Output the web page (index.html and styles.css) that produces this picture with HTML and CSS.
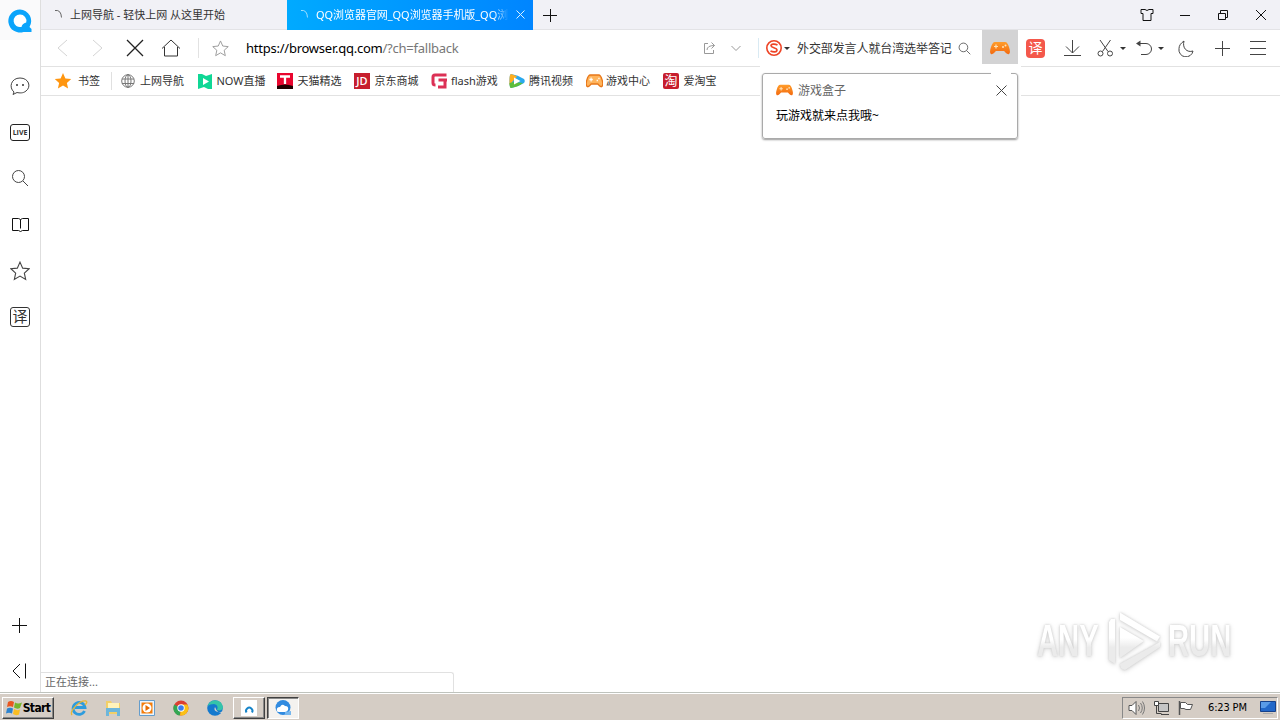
FILE: index.html
```html
<!DOCTYPE html>
<html lang="zh-CN">
<head>
    <meta charset="UTF-8">
    <title>QQ浏览器</title>
    <link rel="stylesheet" href="styles.css">
</head>
<body>

<svg class="defs" width="0" height="0">
    <defs>
        <linearGradient id="orange" x1="0" y1="0" x2="0" y2="1">
            <stop offset="0" stop-color="#ff9d2b"/>
            <stop offset="1" stop-color="#f36a10"/>
        </linearGradient>
        <linearGradient id="fade" gradientUnits="userSpaceOnUse" x1="0" y1="0" x2="0" y2="64">
            <stop offset=".45" stop-color="#fff"/>
            <stop offset=".6" stop-color="#ebebeb"/>
        </linearGradient>
    </defs>
    <symbol id="gamepad" viewBox="0 0 20 14">
        <path d="M5 1h10c2 0 3 2 4 5s1.500 6 0 7-4-2-5-3H6c-1 1-3.500 4-5 3s-1-4 0-7 2-5 4-5z" fill="url(#orange)"/>
        <path d="M4 5.500h4M6 3.500v4" stroke="#ffe3b8" stroke-width="1.200"/>
        <circle cx="13" cy="6" r="1" fill="#ffe3b8"/>
        <circle cx="15.500" cy="4.500" r="1" fill="#ffe3b8"/>
    </symbol>
    <symbol id="star" viewBox="0 0 18 18">
        <path d="M9 1l2.400 5.400 5.800.6-4.300 3.900 1.200 5.700L9 13.600l-5.100 3 1.200-5.700L.8 7l5.800-.6z"/>
    </symbol>
    <symbol id="search" viewBox="0 0 18 18">
        <circle cx="7.500" cy="7.500" r="6"/>
        <path d="M12 12l5 5"/>
    </symbol>
</svg>

<div class="screen">
    <div class="browser">
        <!-- 侧边栏 -->
        <div class="sidebar">
            <div class="logo">
                <svg width="24" height="24" viewBox="0 0 24 24"><path d="M12 .5a11.500 11.500 0 1 0 3.500 22.400h8V20l-2-2A11.500 11.500 0 0 0 12 .5z" fill="#0aa4fb"/><path d="M12 5.500a6.300 6.300 0 1 0 1.500 12.400q.5-3.500 4.700-4.500A6.300 6.300 0 0 0 12 5.500z" fill="#fff"/></svg>
            </div>
            <div class="side-item"><svg width="20" height="19" viewBox="0 0 20 19"><path d="M4 15C-1.500 10.500 1 1 10 1s11.500 9 6 13c-3 2.500-6.500 2-9 1.500L3 17.500z"/><circle class="dot" cx="7" cy="8" r="1"/><circle class="dot" cx="13" cy="8" r="1"/></svg></div>
            <div class="side-item"><span class="live">LIVE</span></div>
            <div class="side-item"><svg width="18" height="18"><use href="#search"/></svg></div>
            <div class="side-item"><svg class="dark" width="19" height="16" viewBox="0 0 19 16"><path d="M1.500 1.500h6l2 1 2-1h6v12h-6l-2 1-2-1h-6zM9.500 2.500v9"/></svg></div>
            <div class="side-item"><svg width="20" height="20"><use href="#star"/></svg></div>
            <div class="side-item"><span class="side-yi">译</span></div>
            <div class="side-bottom">
                <div class="side-item"><svg class="dark" width="16" height="16"><path d="M0 8.500h15M7.500 1v15"/></svg></div>
                <div class="side-item"><svg class="dark" width="15" height="16"><path d="M8 1L1 8l7 7M13.500 .5v15"/></svg></div>
            </div>
        </div>

        <div class="main">
            <!-- 标签栏 -->
            <div class="tabs">
                <div class="tab">
                    <svg class="spinner" width="10" height="10"><path d="M1 1.500q6-1 6.500 7"/></svg>
                    <span class="tab-title">上网导航 - 轻快上网 从这里开始</span>
                </div>
                <div class="tab active">
                    <svg class="spinner" width="10" height="10"><path d="M1 1.500q6-1 6.500 7"/></svg>
                    <span class="tab-title">QQ浏览器官网_QQ浏览器手机版_QQ浏</span>
                    <svg class="tab-close" width="9" height="9"><path d="M.5 .5l8 8M8.500 .5l-8 8"/></svg>
                </div>
                <svg class="new-tab" width="14" height="14"><path d="M0 7.500h14M7.500 1v13"/></svg>
                <div class="window-buttons">
                    <svg width="14" height="13"><path d="M1 1.500h4q2 2 4 0h4v4h-2v7H3v-7H1z"/></svg>
                    <svg width="12" height="12"><path d="M1 6.500h10"/></svg>
                    <svg width="12" height="12"><path d="M1.500 4.500h7v6h-7zM3.500 4V1.500h7v7H9"/></svg>
                    <svg width="12" height="12"><path d="M1 1l10 10M11 1L1 11"/></svg>
                </div>
            </div>

            <!-- 工具栏 -->
            <div class="toolbar">
                <div class="nav">
                    <div class="nav-btn disabled"><svg width="12" height="18"><path d="M11 1L2 9l9 8"/></svg></div>
                    <div class="nav-btn disabled"><svg width="12" height="18"><path d="M1 1l9 8-9 8"/></svg></div>
                    <div class="nav-btn stop"><svg width="18" height="18"><path d="M1 1l16 16M17 1L1 17"/></svg></div>
                    <div class="nav-btn"><svg width="20" height="18"><path d="M1 9.500L10 1l9 8.500M3.500 8v9h13V8"/></svg></div>
                </div>
                <div class="address">
                    <svg class="fav" width="17" height="17"><use href="#star"/></svg>
                    <span class="url">https://browser.qq.com<span class="path">/?ch=fallback</span></span>
                    <svg class="share" width="13" height="13"><path d="M5 1.500H1.500v10h9V8M4 8q0-4.500 7.500-4.500M8.500 .5l3 3-3 3"/></svg>
                    <svg class="down" width="10" height="7"><path d="M.5 1L5 5.500 9.500 1"/></svg>
                </div>
                <div class="search">
                    <svg class="sogou" width="16" height="16"><circle cx="8" cy="8" r="7.200"/><path d="M11.500 5C9 3.700 5 3.700 5 5.800S11 7.600 11 10s-4 2.300-6.500 1"/></svg>
                    <i class="caret"></i>
                    <span class="search-text">外交部发言人就台湾选举答记</span>
                    <svg class="find" width="13" height="13"><use href="#search"/></svg>
                </div>
                <div class="game-btn"><svg width="20" height="14"><use href="#gamepad"/></svg></div>
                <div class="tools">
                    <span class="tool yi">译</span>
                    <svg class="tool download" width="18" height="17"><path d="M9.500 0v13M3 6.500L9.500 13 16 6.500M1 15.500h17"/></svg>
                    <svg class="tool scissors" width="17" height="17"><path d="M3 0l8 11.500M13.500 0l-8 11.500"/><circle cx="3.500" cy="13.500" r="2.500"/><circle cx="13" cy="13.500" r="2.500"/></svg>
                    <i class="caret"></i>
                    <svg class="tool undo" width="17" height="16"><path d="M1 3.500h9a5.500 5.500 0 0 1 0 11H5"/><path class="arrow" d="M0 3.500L4.500 .5v6z"/></svg>
                    <i class="caret"></i>
                    <svg class="tool moon" width="16" height="17"><path d="M6 1C3 3 1 5.500 1 8.500a7 7 0 0 0 14 2.500C9 13 4 8 6 1z"/></svg>
                    <svg class="tool plus" width="15" height="15"><path d="M0 7.500h15M7.500 0v15"/></svg>
                    <svg class="tool menu" width="16" height="15"><path d="M0 .5h16M0 7.500h16M0 13.500h16"/></svg>
                </div>
            </div>

            <!-- 书签栏 -->
            <div class="bookmarks">
                <div class="bookmark first"><svg class="gold" width="18" height="18"><use href="#star"/></svg><span>书签</span></div>
                <div class="bookmark b-nav"><svg width="14" height="14"><g fill="none" stroke="#777"><circle cx="7" cy="7" r="6.300"/><ellipse cx="7" cy="7" rx="3" ry="6.300"/><path d="M1 5h12M1 9.500h12M7 0v14"/></g></svg><span>上网导航</span></div>
                <div class="bookmark b-now"><svg width="14" height="15"><path d="M0 0h4l4 2 6-2v15h-4l-4-2-6 2z" fill="#10d795"/><path d="M5 4l6 3.500L5 11z" fill="#fff"/></svg><span>NOW直播</span></div>
                <div class="bookmark b-tmall"><svg width="16" height="16"><path d="M0 0h16v16H0z" fill="#e9052e"/><path d="M0 13q8-3 16 0v3H0z" fill="#200"/><path d="M3 3.500h10M8 3.500V11" stroke="#fff" stroke-width="2.300"/></svg><span>天猫精选</span></div>
                <div class="bookmark b-jd"><b class="jd">JD</b><span>京东商城</span></div>
                <div class="bookmark b-flash"><svg width="16" height="16"><path d="M15.500 2H4Q2 2 2 4v6q0 2 2.500 2M16 7H7.500M14 7v7H7" fill="none" stroke="#dc3055" stroke-width="3"/></svg><span>flash游戏</span></div>
                <div class="bookmark b-video"><svg width="16" height="16"><path d="M2 1Q.5 1 .5 8T2 15q7-1 13-5 1.500-2 0-4Q9 2 2 1z" fill="#29a9ee"/><path d="M2 1Q.5 1 .5 8V12L8 3.500Q5 1.500 2 1z" fill="#ffae20"/><path d="M.5 10Q.5 15 2 15q7-1 12-5L5 9z" fill="#5dbd3a"/><path d="M5 4.500l6.500 3.500L5 11.500z" fill="#fff"/></svg><span>腾讯视频</span></div>
                <div class="bookmark b-game"><svg width="17" height="14" viewBox="0 0 20 14" preserveAspectRatio="none"><path d="M5 1h10c2 0 3 2 4 5s1 5.500-.5 6.500S15 11 14 10H6c-1 1-3 3.500-4.500 2.500S0 9 1 6s2-5 4-5z" fill="#ffb45c" stroke="#e87718" stroke-width="1.500"/><path d="M4 5.500h4M6 3.500v4M12.500 6.500h1.500M14.500 4.500H16" stroke="#fff" stroke-width="1.300"/></svg><span>游戏中心</span></div>
                <div class="bookmark b-tao"><b class="tao">淘</b><span>爱淘宝</span></div>
            </div>

            <div class="page">
                <div class="watermark">
                    <span>ANY</span>
                    <svg width="58" height="64"><path d="M14 18v31l24-17zM14 11V3.500L54 27.500l-3 5L14 11M19 61l35-23v-5L14 55q0 5 5 6M9 10H5l-2 3v38l6 4z"/></svg>
                    <span>RUN</span>
                </div>
                <div class="status">正在连接...</div>
            </div>

            <!-- 游戏盒子提示 -->
            <div class="tip-area">
                <div class="tip">
                    <div class="tip-head">
                        <svg width="17" height="12" viewBox="0 0 20 14" preserveAspectRatio="none"><use href="#gamepad"/></svg>
                        <span>游戏盒子</span>
                        <svg class="tip-close" width="11" height="11"><path d="M.5 .5l10 10M10.500 .5l-10 10"/></svg>
                    </div>
                    <div class="tip-text">玩游戏就来点我哦~</div>
                </div>
            </div>
        </div>
    </div>

    <!-- 任务栏 -->
    <div class="taskbar">
        <div class="start">
            <svg width="17" height="16"><path d="M2 2q3-2 6 0L7 7Q4 5.500 1 7z" fill="#e9561f"/><path d="M9 2.500q3 2 7 0L14 8q-3 1.500-6-.5z" fill="#75b62c"/><path d="M1 8.500q3-1.500 6 0L6 13.500Q3 12 0 13.500z" fill="#2c83cf"/><path d="M8 9q3 2 6 .5l-1 5q-3 1.500-6-.5z" fill="#fbbd20"/></svg>
            <b>Start</b>
        </div>
        <div class="quick">
            <svg width="18" height="18"><path d="M14.500 12A6 6 0 1 1 15 8.500H5" fill="none" stroke="#2e9cdd" stroke-width="2.800"/><path d="M2 16C-1 12 10 1 16 2q2 1-1 4" fill="none" stroke="#e9b735" stroke-width="1.300"/></svg>
            <svg width="18" height="18"><path d="M2 2h5l1 2h8v11H2z" fill="#f2cf68"/><path d="M4 4h11v6H4z" fill="#fff3ba"/><path d="M2 9h14v8h-3v-4H5v4H2z" fill="#6db6db"/></svg>
            <svg width="18" height="18"><path d="M1.500 1.500h15v15h-15z" fill="#eaf5ff" stroke="#659dcc"/><path d="M3.500 3.500h11v11h-11z" fill="#f47c0a"/><circle cx="9" cy="9" r="4.500" fill="#fff"/><path d="M7.500 6l4.500 3-4.500 3z" fill="#e56a00"/></svg>
            <svg width="18" height="18"><circle cx="9" cy="9" r="7.500" fill="#dc3f32"/><path d="M9 9L2.200 5.500a7.500 7.500 0 0 0 5.500 11z" fill="#34a653"/><path d="M9 9h7.500a7.500 7.500 0 0 1-8.500 7.500z" fill="#fbc116"/><path d="M9 5.500h6.500l1 3.500H9z" fill="#fbc116"/><circle cx="9" cy="9" r="3.700" fill="#fff"/><circle cx="9" cy="9" r="2.800" fill="#3c7ded"/></svg>
            <svg width="18" height="18"><circle cx="9" cy="9" r="7.800" fill="#1479ce"/><path d="M1.500 7A8 8 0 0 1 17 8c0 3-3 4-6 3q2-5-3-6-4 0-6.500 2z" fill="#35c4a9"/><path d="M9 8q-2 4 3 5 2 1 4-.5l2 1Q12 16 9 8z" fill="#d8d2ca"/></svg>
        </div>
        <div class="task"><svg width="16" height="16"><path d="M0 0h16v16H0z" fill="#fff"/><path d="M5.500 12.500a3.200 3.200 0 1 1 5.500 0" fill="none" stroke="#1684c9" stroke-width="2"/></svg></div>
        <div class="task pressed"><svg width="18" height="18"><circle cx="9" cy="8.500" r="7.500" fill="#318be0"/><path d="M3 12q-1-4 3-4 2-4 5-1 4 0 3 4-1 2-3 2H5q-2 0-2-1z" fill="#fff"/><path d="M11 13l6-1v4h-6z" fill="#76b6ed"/></svg></div>
        <div class="tray">
            <svg width="18" height="16"><path d="M1 5.500h3l4-4v13l-4-4H1z" fill="#fff" stroke="#555"/><path d="M10.500 5q2 3 0 6M12.500 3q3.500 5 0 10M14.500 1.500q4 6.500 0 13" fill="none" stroke="#777"/></svg>
            <svg width="17" height="16"><path d="M5.500 3.500h10v8h-10z" fill="#c5c5c5" stroke="#444"/><path d="M1.500 1.500h4v4h-4z" fill="#fff" stroke="#444"/><path d="M3.500 5.500v8h5M8 14.500h8" fill="none" stroke="#444"/></svg>
            <svg width="17" height="16"><path d="M2.500 1v14" stroke="#555" stroke-width="1.500"/><path d="M3.500 2.500h5l2 2h5l-2 5H9l-2-1H3.500z" fill="#fff" stroke="#555"/></svg>
            <span class="clock">6:23 PM</span>
            <svg class="desktop" width="16" height="13"><path d="M.5 .5h15v10H.5z" fill="#2368c9" stroke="#16418b"/><path d="M1 1h10L5 7H1z" fill="#5a9be7"/><path d="M3 12.500h10" stroke="#aaa"/></svg>
        </div>
    </div>
</div>

</body>
</html>
```

FILE: styles.css
```css
* {
    box-sizing: border-box;
}
body {
    margin: 0;
    font-family: "Noto Sans", "Noto Sans CJK SC", sans-serif;
    font-size: 11px;
    color: #333;
    background: #fff;
    overflow: hidden;
}
svg {
    display: block;
    flex: none;
    fill: none;
    stroke: #333;
}
.bookmark svg,
.quick svg,
.tray svg,
.task svg,
.start svg,
.logo svg,
.game-btn svg,
.tip-head svg {
    stroke: none;
}
.defs {
    position: absolute;
}
.screen {
    display: flex;
    flex-direction: column;
    width: 1280px;
    height: 720px;
}
.browser {
    display: flex;
    height: 692px;
}

/* 侧边栏 */
.sidebar {
    display: flex;
    flex-direction: column;
    width: 41px;
    border-right: 1px solid #dedede;
}
.logo {
    display: flex;
    align-items: center;
    justify-content: center;
    height: 40px;
    margin-bottom: 23px;
    padding-top: 2px;
    background: #fafafb;
}
.side-item {
    display: flex;
    align-items: center;
    justify-content: center;
    height: 46.200px;
}
.side-item svg {
    stroke: #444;
}
.side-item svg.dark {
    stroke: #111;
}
.side-item .dot {
    fill: #333;
    stroke: none;
}
.live {
    width: 20px;
    height: 17px;
    border: 1px solid #222;
    border-radius: 3px;
    font: bold 7px/15px "Open Sans", sans-serif;
    text-align: center;
}
.side-yi {
    width: 20px;
    height: 20px;
    border: 1px solid #333;
    border-radius: 3px;
    font-size: 15px;
    line-height: 17px;
    text-align: center;
}
.side-bottom {
    margin: auto 1px -2px 0;
}

/* 标签栏 */
.main {
    position: relative;
    display: flex;
    flex-direction: column;
    width: 1239px;
}
.tabs {
    display: flex;
    align-items: center;
    height: 30px;
    background: #f1f1f6;
    border-bottom: 1px solid #e3e3e6;
}
.tab {
    display: flex;
    align-items: center;
    width: 246px;
    height: 30px;
    padding-left: 13px;
}
.tab.active {
    color: #fff;
    background: linear-gradient(90deg, #00aaff, #0085ff);
}
.spinner {
    stroke: #666;
    margin: -2px 6px 0 0;
}
.active .spinner {
    stroke: #9fe0ff;
}
.tab-title {
    width: 193px;
    padding-bottom: 2px;
    white-space: nowrap;
}
.active .tab-title {
    letter-spacing: -.06px;
    -webkit-mask-image: linear-gradient(90deg, #000 92%, transparent);
}
.tab-close {
    margin-left: 7px;
    stroke: #d9f1ff;
}
.new-tab {
    margin-left: 10px;
    stroke: #111;
}
.window-buttons {
    display: flex;
    align-items: center;
    gap: 26px;
    margin-left: auto;
    padding-right: 13px;
}
.window-buttons svg {
    stroke: #111;
}
.window-buttons svg:first-child {
    margin-right: -1px;
}

/* 工具栏 */
.toolbar {
    display: flex;
    align-items: center;
    height: 37px;
    border-bottom: 1px solid #e2e2e2;
}
.nav {
    display: flex;
    width: 158px;
    height: 20px;
    padding-left: 3px;
    border-right: 1px solid #e2e2e2;
}
.nav-btn {
    display: flex;
    align-items: center;
    justify-content: center;
    width: 36.300px;
}
.disabled svg {
    stroke: #d4d4d4;
}
.stop svg {
    stroke: #222;
    stroke-width: 1.300;
}
.address {
    display: flex;
    align-items: center;
    width: 560px;
    height: 20px;
    padding-left: 13px;
    border-right: 1px solid #d9eaf3;
}
.address svg {
    stroke: #999;
}
.url {
    width: 457px;
    margin-left: 17px;
    font: 13px "Noto Sans", sans-serif;
    letter-spacing: -.24px;
    color: #000;
}
.path {
    color: #777;
}
.down {
    margin-left: 15px;
}
.search {
    display: flex;
    align-items: center;
    width: 223px;
    padding-left: 7px;
}
.sogou {
    stroke: #ee4426;
    stroke-width: 1.600;
}
.caret {
    flex: none;
    border: 3px solid transparent;
    border-top-color: #333;
    border-bottom: 0;
}
.search .caret {
    margin-left: 2px;
}
.search-text {
    width: 155px;
    margin-left: 7px;
    font-size: 12px;
    letter-spacing: -.1px;
    white-space: nowrap;
}
.find {
    margin-left: 6px;
}
.game-btn {
    display: flex;
    align-items: center;
    justify-content: center;
    width: 36px;
    height: 34px;
    margin-top: -2px;
    padding-top: 2px;
    background: #d3d3d4;
}
.tools {
    display: flex;
    align-items: center;
}
.tool {
    stroke: #444;
}
.yi {
    width: 19px;
    height: 19px;
    margin-left: 8px;
    border-radius: 4px;
    font-size: 14px;
    line-height: 18px;
    text-align: center;
    color: #fff;
    background: #f4584b;
}
.download {
    margin-left: 18px;
}
.scissors {
    margin: 0 6px 0 16px;
}
.undo {
    margin: 0 5px 0 10px;
}
.undo .arrow {
    fill: #444;
    stroke: none;
}
.moon {
    margin-left: 14px;
}
.plus {
    margin-left: 21px;
}
.menu {
    margin-left: 20px;
}

/* 书签栏 */
.bookmarks {
    display: flex;
    align-items: center;
    height: 29px;
    border-bottom: 1px solid #e2e2e2;
}
.bookmark {
    display: flex;
    align-items: center;
    gap: 4.500px;
    white-space: nowrap;
}
.bookmark span {
    margin-top: -2px;
}
.bookmark svg.gold {
    fill: #ff9610;
}
.first {
    width: 71px;
    height: 18px;
    padding-left: 13px;
    gap: 6px;
    border-right: 1px solid #e0e0e0;
}
.b-nav {
    width: 86px;
    padding-left: 9px;
    gap: 5px;
}
.b-now {
    width: 79px;
}
.b-tmall {
    width: 77px;
}
.b-jd {
    width: 77px;
}
.b-flash {
    width: 78px;
    gap: 4px;
}
.b-video {
    width: 77px;
    gap: 4px;
}
.b-game {
    width: 77px;
    gap: 3px;
}
.jd,
.tao {
    width: 16px;
    height: 16px;
    line-height: 16px;
    text-align: center;
    color: #fff;
    background: #c71e2d;
}
.jd {
    font-family: "Open Sans", sans-serif;
    font-weight: 600;
}
.tao {
    border-radius: 2px;
    font-size: 13px;
    line-height: 15px;
    font-weight: normal;
}

/* 页面 */
.page {
    display: flex;
    flex-direction: column;
    flex: 1;
}
.watermark {
    display: flex;
    align-items: center;
    align-self: flex-end;
    margin: auto 46px -1px 0;
    gap: 4px;
    filter: drop-shadow(0 0 1px #ccc) drop-shadow(0 1px 2px #ddd);
}
.watermark span {
    display: block;
    width: 66px;
    font: bold 45px/64px "Liberation Sans", sans-serif;
    color: transparent;
    background: linear-gradient(#fff 48%, #ebebeb 60%);
    -webkit-background-clip: text;
    background-clip: text;
    transform: scaleX(.65);
    transform-origin: left;
    white-space: nowrap;
}
.watermark span:first-child {
    width: 65px;
}
.watermark span {
    /* 字宽大于容器，背景需覆盖整行 */
    padding-right: 36px;
    margin-right: -36px;
    box-sizing: content-box;
}
.watermark svg {
    fill: url(#fade);
    stroke: none;
}
.status {
    width: 413px;
    height: 20px;
    padding-left: 4px;
    border: 1px solid #e1e1e1;
    border-width: 1px 1px 0 0;
    border-radius: 0 3px 0 0;
    line-height: 17px;
    color: #666;
}

/* 提示气泡 */
.tip-area {
    position: absolute;
    left: 719px;
    top: 66px;
    width: 261px;
    height: 78px;
    padding: 7px 3px 0 2px;
    background: #fff;
}
.tip {
    position: relative;
    height: 66px;
    padding: 7px 10px 0 13px;
    border: 1px solid #aaa;
    border-radius: 3px;
    box-shadow: 0 1px 2px #999;
}
.tip::before {
    content: "";
    position: absolute;
    top: -3px;
    right: 6px;
    width: 20px;
    height: 4px;
    background: #fff;
}
.tip-head {
    display: flex;
    align-items: center;
    height: 18px;
    gap: 5px;
    font-size: 12px;
    color: #666;
}
.tip-head .tip-close {
    margin-left: auto;
    stroke: #444;
}
.tip-text {
    margin-top: 8px;
    line-height: 18px;
    font-size: 12px;
    color: #000;
}

/* 任务栏 */
.taskbar {
    display: flex;
    align-items: center;
    height: 28px;
    padding: 2px 2px 0;
    border-top: 1px solid #bfc3bd;
    box-shadow: inset 0 1px #fff;
    background: #d5cdc5;
}
.start,
.task {
    display: flex;
    align-items: center;
    justify-content: center;
    height: 22px;
    border: 1px solid;
    border-color: #fff #404040 #404040 #fff;
    box-shadow: inset -1px -1px #888;
}
.start {
    width: 52px;
    color: #000;
    font: 12px "DejaVu Sans Condensed", sans-serif;
}
.start b {
    letter-spacing: -.6px;
}
.quick {
    display: flex;
    gap: 16px;
    width: 179px;
    padding-left: 16px;
}
.task {
    width: 32px;
    margin-right: 2px;
}
.task.pressed {
    border-color: #404040 #fff #fff #404040;
    box-shadow: inset 1px 1px #888;
    background: #f4f2ef;
}
.tray {
    display: flex;
    align-items: center;
    width: 156px;
    height: 22px;
    margin-left: auto;
    padding-left: 5px;
    gap: 7px;
    border: 1px solid;
    border-color: #888 #fff #fff #888;
}
.clock {
    width: 43px;
    margin-left: 7px;
    font: 11px "DejaVu Sans Condensed", sans-serif;
    letter-spacing: -.15px;
    white-space: nowrap;
    color: #000;
}
.desktop {
    margin-left: 2px;
}
```
